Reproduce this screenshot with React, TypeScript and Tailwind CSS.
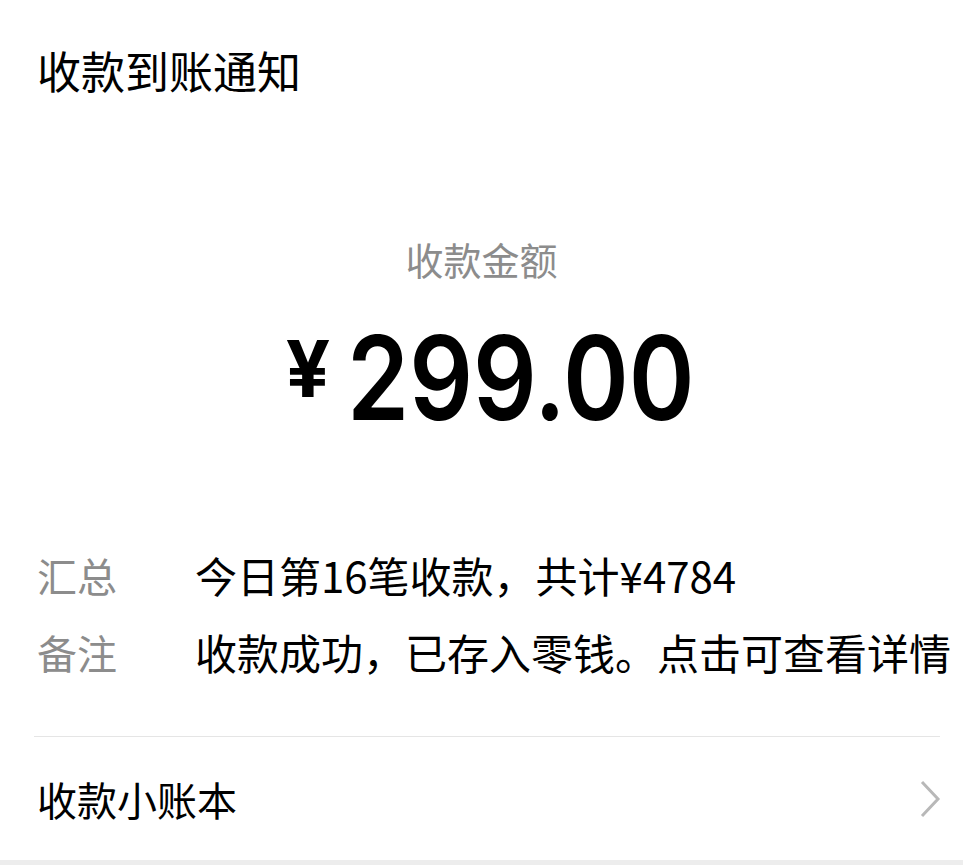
export default function App() {
  return (
    <div
      className="flex h-[865px] w-[963px] flex-col bg-white text-black"
      style={{ fontFamily: '"Noto Sans CJK SC", "Noto Sans", sans-serif' }}
    >
      <div className="flex h-[140px] items-center pl-[37px] text-[44px] leading-none">
        收款到账通知
      </div>

      <div className="mt-[99px] flex h-[40px] items-center justify-center text-[38px] leading-none text-[#8c8c8c]">
        收款金额
      </div>

      <div className="mt-[56px] flex items-start justify-center pl-[24px] font-['Inter',sans-serif]">
        <span className="mt-[2px] text-[78px] font-bold leading-[64px] tracking-[-4px]">¥</span>
        <span className="ml-[21px] mr-[-50px] inline-block origin-left scale-x-[0.86] text-[116px] font-semibold leading-[86px]">
          299.00
        </span>
      </div>

      <div className="mt-[134px] flex flex-col gap-[37px] leading-none">
        <div className="flex h-[40px] items-center">
          <span className="w-[195px] pl-[37px] text-[40px] text-[#8c8c8c]">汇总</span>
          <span className="text-[42px]">今日第16笔收款，共计¥4784</span>
        </div>
        <div className="flex h-[40px] items-center">
          <span className="w-[195px] pl-[37px] text-[40px] text-[#8c8c8c]">备注</span>
          <span className="whitespace-nowrap text-[42px]">收款成功，已存入零钱。点击可查看详情</span>
        </div>
      </div>

      <div className="ml-[34px] mr-[23px] mt-[64px] h-px bg-[#e5e5e5]" />

      <div className="flex h-[123px] items-center justify-between pl-[37px] pr-[22px] text-[40px] leading-none">
        <span>收款小账本</span>
        <svg width="22" height="38" viewBox="0 0 22 38" fill="none">
          <path d="M3 2 L19 19 L3 36" stroke="#b8b8b8" strokeWidth="3" />
        </svg>
      </div>

      <div className="flex-1 bg-[#ededed]" />
    </div>
  );
}
